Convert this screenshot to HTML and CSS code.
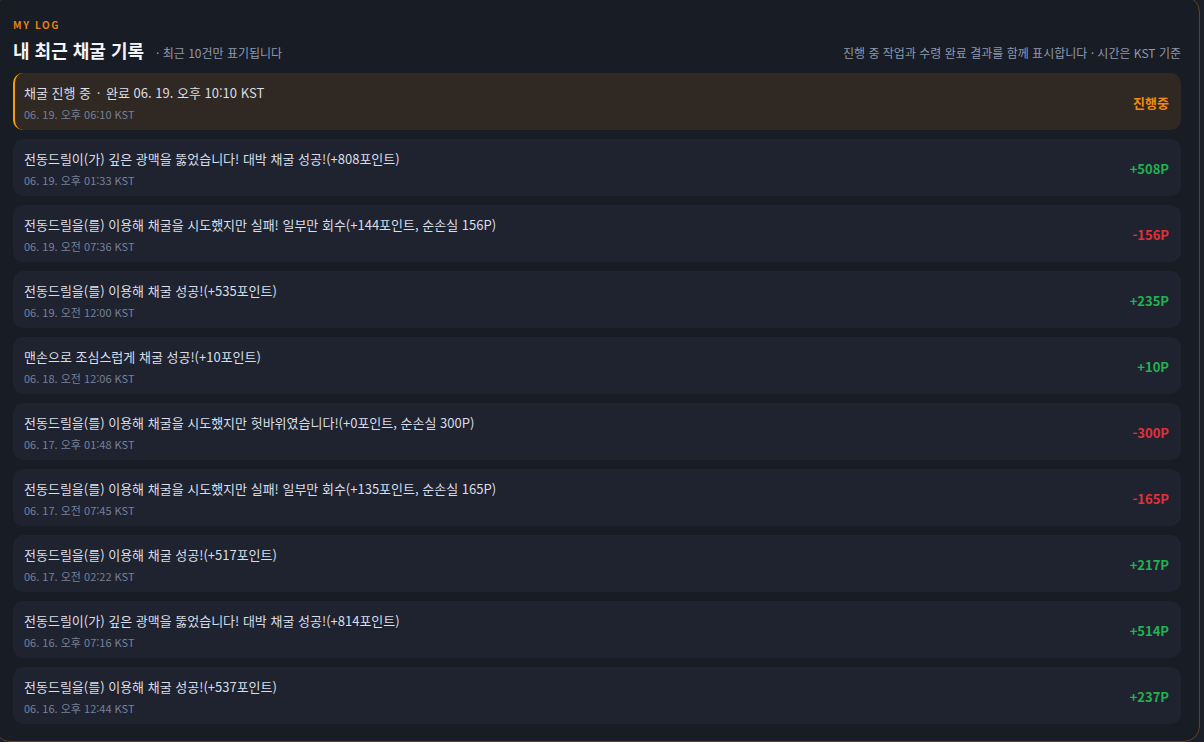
FILE: index.html
```html
<!DOCTYPE html>
<html lang="ko">
<head>
<meta charset="utf-8">
<title>MY LOG</title>
<link rel="stylesheet" href="styles.css">
</head>
<body>
<section class="panel">
  <div class="eyebrow">MY LOG</div>
  <header class="head">
    <div class="head-left">
      <h1 class="title">내 최근 채굴 기록</h1>
      <span class="sub">· 최근 10건만 표기됩니다</span>
    </div>
    <div class="head-right">진행 중 작업과 수령 완료 결과를 함께 표시합니다 · 시간은 KST 기준</div>
  </header>
  <ul class="list">
    <li class="item active">
      <div class="info"><div class="msg">채굴 진행 중 <span class="dot">·</span> 완료 06. 19. 오후 10:10 KST</div><div class="time">06. 19. 오후 06:10 KST</div></div>
      <div class="amt orange">진행중</div>
    </li>
    <li class="item">
      <div class="info"><div class="msg">전동드릴이(가) 깊은 광맥을 뚫었습니다! 대박 채굴 성공!(+808포인트)</div><div class="time">06. 19. 오후 01:33 KST</div></div>
      <div class="amt green">+508P</div>
    </li>
    <li class="item">
      <div class="info"><div class="msg">전동드릴을(를) 이용해 채굴을 시도했지만 실패! 일부만 회수(+144포인트, 순손실 156P)</div><div class="time">06. 19. 오전 07:36 KST</div></div>
      <div class="amt red">-156P</div>
    </li>
    <li class="item">
      <div class="info"><div class="msg">전동드릴을(를) 이용해 채굴 성공!(+535포인트)</div><div class="time">06. 19. 오전 12:00 KST</div></div>
      <div class="amt green">+235P</div>
    </li>
    <li class="item">
      <div class="info"><div class="msg">맨손으로 조심스럽게 채굴 성공!(+10포인트)</div><div class="time">06. 18. 오전 12:06 KST</div></div>
      <div class="amt green">+10P</div>
    </li>
    <li class="item">
      <div class="info"><div class="msg">전동드릴을(를) 이용해 채굴을 시도했지만 헛바위였습니다!(+0포인트, 순손실 300P)</div><div class="time">06. 17. 오후 01:48 KST</div></div>
      <div class="amt red">-300P</div>
    </li>
    <li class="item">
      <div class="info"><div class="msg">전동드릴을(를) 이용해 채굴을 시도했지만 실패! 일부만 회수(+135포인트, 순손실 165P)</div><div class="time">06. 17. 오전 07:45 KST</div></div>
      <div class="amt red">-165P</div>
    </li>
    <li class="item">
      <div class="info"><div class="msg">전동드릴을(를) 이용해 채굴 성공!(+517포인트)</div><div class="time">06. 17. 오전 02:22 KST</div></div>
      <div class="amt green">+217P</div>
    </li>
    <li class="item">
      <div class="info"><div class="msg">전동드릴이(가) 깊은 광맥을 뚫었습니다! 대박 채굴 성공!(+814포인트)</div><div class="time">06. 16. 오후 07:16 KST</div></div>
      <div class="amt green">+514P</div>
    </li>
    <li class="item">
      <div class="info"><div class="msg">전동드릴을(를) 이용해 채굴 성공!(+537포인트)</div><div class="time">06. 16. 오후 12:44 KST</div></div>
      <div class="amt green">+237P</div>
    </li>
  </ul>
</section>
</body>
</html>
```

FILE: styles.css
```css
html, body {
  margin: 0;
  padding: 0;
  background: #1c1f27;
  height: 742px;
  overflow: hidden;
  font-family: "Noto Sans CJK KR", "Noto Sans", sans-serif;
}
.panel {
  box-sizing: border-box;
  margin: -4px 4px 0 -6px;
  height: 746px;
  border: 1px solid #5a4522;
  border-radius: 16px;
  background: #181c25;
  padding: 21px 18px 0 18px;
}
.eyebrow {
  color: #e8820c;
  font-size: 10px;
  font-weight: 700;
  letter-spacing: 1.6px;
  line-height: 14px;
}
.head {
  display: flex;
  justify-content: space-between;
  align-items: baseline;
  margin-top: 4px;
}
.head-left {
  display: flex;
  align-items: baseline;
  gap: 12px;
}
.title {
  margin: 0;
  font-size: 18px;
  font-weight: 700;
  color: #f3f5f8;
  line-height: 28px;
}
.sub {
  font-size: 12px;
  color: #8e99ad;
}
.head-right {
  font-size: 12px;
  color: #8e99ad;
}
.list {
  list-style: none;
  margin: 9px 0 0 0;
  padding: 0;
  display: flex;
  flex-direction: column;
  gap: 9px;
}
.item {
  box-sizing: border-box;
  height: 57px;
  display: flex;
  align-items: center;
  justify-content: space-between;
  background: #1f2330;
  border-radius: 10px;
  padding: 0 12px 0 11px;
}
.item.active {
  background: #302822;
  border-left: 2px solid #f59e0b;
  padding-left: 9px;
}
.info {
  display: flex;
  flex-direction: column;
  gap: 5px;
  margin-top: 1px;
}
.msg {
  font-size: 13px;
  color: #d9dee7;
  line-height: 19px;
}
.dot {
  padding: 0 2px;
}
.time {
  font-size: 11px;
  color: #75819a;
  line-height: 15px;
}
.amt {
  font-size: 13px;
  font-weight: 700;
  margin-top: 2px;
}
.green { color: #22b24f; }
.red { color: #e2303a; }
.orange { color: #ef8a12; }
```
